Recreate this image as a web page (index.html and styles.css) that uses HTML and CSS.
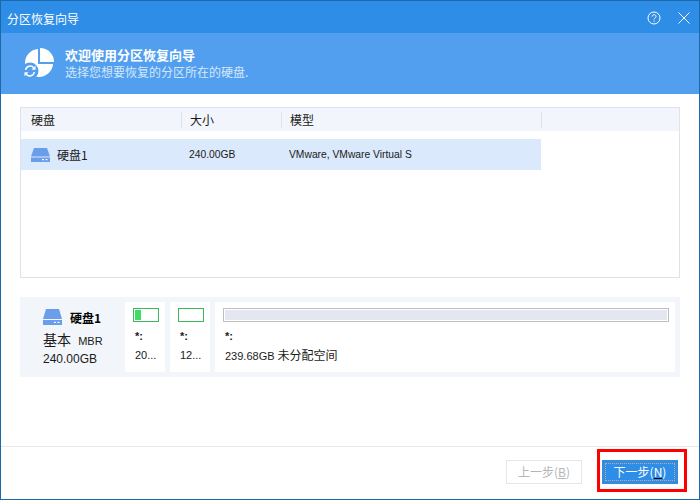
FILE: index.html
```html
<!DOCTYPE html>
<html lang="zh">
<head>
<meta charset="utf-8">
<title>分区恢复向导</title>
<link rel="stylesheet" href="styles.css">
</head>
<body>
<div class="window">
  <header class="titlebar">
    <span class="title">分区恢复向导</span>
    <div class="controls">
      <svg class="ctl" width="14" height="14" viewBox="0 0 14 14"><circle cx="7" cy="7" r="6" fill="none" stroke="#fff" stroke-width="1"/><path d="M5 5.600c0-1.200 1-1.900 2-1.900s2 .7 2 1.800c0 1.500-2 1.500-2 3" fill="none" stroke="#fff" stroke-width="1"/><rect x="6.500" y="9.600" width="1" height="1.200" fill="#fff"/></svg>
      <svg class="ctl" width="12" height="12" viewBox="0 0 12 12"><path d="M.5.5l11 11M11.500.5l-11 11" stroke="#fff" stroke-width="1"/></svg>
    </div>
  </header>
  <section class="banner">
    <svg class="banner-icon" width="34" height="34" viewBox="0 0 34 34">
      <path d="M16 3A14 14 0 1 0 31 18H16z" fill="#fff"/>
      <path d="M18 2A14 14 0 0 1 32 16H18z" fill="#fff"/>
      <circle cx="8" cy="25" r="8.500" fill="#539fef"/>
      <path d="M3.700 24a4.500 4.500 0 0 1 8-2.200M12.300 26a4.500 4.500 0 0 1-8 2.200" fill="none" stroke="#fff" stroke-width="1.500"/>
      <path d="M13.500 19.800v4h-4zM2.500 30.200v-4h4z" fill="#fff"/>
    </svg>
    <div class="banner-text">
      <div class="banner-title">欢迎使用分区恢复向导</div>
      <div class="banner-sub">选择您想要恢复的分区所在的硬盘.</div>
    </div>
  </section>
  <main class="content">
    <section class="table">
      <div class="thead">
        <div class="th col-disk">硬盘</div>
        <div class="th col-size">大小</div>
        <div class="th col-model">模型</div>
        <div class="th col-rest"></div>
      </div>
      <div class="row">
        <div class="td col-disk cell-disk">
          <svg class="disk-icon" width="19" height="14" viewBox="0 0 19 14"><path d="M3 0h13l3 8.500H0z" fill="#6a9eea"/><rect y="9.500" width="19" height="4.500" fill="#6a9eea"/><rect x="11" y="11" width="2" height="1.200" fill="#fff"/><rect x="14.500" y="11" width="2" height="1.200" fill="#fff"/></svg>
          <span>硬盘1</span>
        </div>
        <div class="td col-size">240.00GB</div>
        <div class="td col-model">VMware, VMware Virtual S</div>
      </div>
    </section>
    <section class="map">
      <div class="map-disk">
        <div class="map-name">
          <svg class="disk-icon" width="19" height="16" viewBox="0 0 19 16"><path d="M3 0h13l3 10H0z" fill="#6a9eea"/><rect y="11" width="19" height="5" fill="#6a9eea"/><rect x="11" y="12.800" width="2" height="1.200" fill="#fff"/><rect x="14.500" y="12.800" width="2" height="1.200" fill="#fff"/></svg>
          <b>硬盘1</b>
        </div>
        <div class="map-type">基本 <span class="mbr">MBR</span></div>
        <div class="map-total">240.00GB</div>
      </div>
      <div class="part narrow">
        <div class="bar green"><i class="fill"></i></div>
        <div class="drive">*:</div>
        <div class="psize">20...</div>
      </div>
      <div class="part narrow">
        <div class="bar green"></div>
        <div class="drive">*:</div>
        <div class="psize">12...</div>
      </div>
      <div class="part wide">
        <div class="bar gray"></div>
        <div class="drive">*:</div>
        <div class="psize">239.68GB<span class="cjk">未分配空间</span></div>
      </div>
    </section>
  </main>
  <footer class="footer">
    <button class="btn prev" type="button">上一步(<u>B</u>)</button>
    <div class="highlight">
      <button class="btn next" type="button"><span class="focus">下一步(<u>N</u>)</span></button>
    </div>
  </footer>
</div>
</body>
</html>
```
FILE: styles.css
```css
* { box-sizing: border-box; }
html, body { margin: 0; padding: 0; }
body {
  width: 700px;
  height: 500px;
  overflow: hidden;
  background: #fff;
  font-family: "Liberation Sans", "Noto Sans CJK SC", sans-serif;
  font-size: 11px;
  color: #1a1a1a;
}
.window {
  width: 700px;
  height: 500px;
  border: 1px solid #1c69aa;
  display: flex;
  flex-direction: column;
  background: #fff;
}
.titlebar {
  height: 32px;
  flex: none;
  background: #2e8de6;
  color: #fff;
  display: flex;
  align-items: center;
  justify-content: space-between;
  padding: 2px 9px 0 6px;
}
.title { font-size: 12px; font-family: "Noto Sans CJK SC", sans-serif; }
.controls { display: flex; align-items: center; gap: 17px; }
.ctl { display: block; }
.banner {
  height: 61px;
  flex: none;
  background: #539fef;
  display: flex;
  align-items: center;
  padding: 0 0 0 21px;
  color: #fff;
}
.banner-icon { flex: none; margin-right: 9px; margin-top: -1px; }
.banner-text { margin-top: -1px; font-family: "Noto Sans CJK SC", sans-serif; font-size: 12px; line-height: 17px; }
.banner-title { font-weight: 700; font-size: 13px; }
.banner-sub { color: #d4e7fb; }
.content {
  flex: 1;
  padding: 13px 19px 0;
}
.table {
  height: 171px;
  width: 660px;
  border: 1px solid #e0e1ec;
}
.thead {
  display: flex;
  height: 23px;
  background: #f2f5fb;
  align-items: center;
}
.th {
  height: 16px;
  line-height: 16px;
  font-family: "Noto Sans CJK SC", sans-serif;
  font-size: 12px;
  border-right: 1px solid #dfe2ea;
}
.col-disk { width: 161px; padding-left: 10px; }
.col-size { width: 100px; padding-left: 8px; }
.col-model { width: 260px; padding-left: 8px; }
.col-rest { flex: 1; border-right: 0; }
.row {
  display: flex;
  align-items: center;
  height: 31px;
  margin-top: 8px;
  width: 520px;
  background: #dbe9fd;
}
.td { flex: none; white-space: nowrap; font-size: 10.300px; }
.td.col-size, .td.col-model { padding-left: 7px; }
.cell-disk { display: flex; align-items: center; gap: 7px; }
.cell-disk span { font-family: "Noto Sans CJK SC", sans-serif; font-size: 12px; }
.disk-icon { display: block; flex: none; }
.map {
  margin-top: 19px;
  width: 660px;
  height: 80px;
  background: #f2f6fb;
  display: flex;
  gap: 5px;
  padding: 5px;
}
.map-disk { width: 95px; padding: 7px 0 0 18px; font-size: 12px; flex: none; }
.map-name { display: flex; align-items: center; gap: 8px; height: 16px; font-family: "Noto Sans CJK SC", sans-serif; }
.map-name b { font-size: 12px; color: #000; }
.map-type { margin-top: 4px; font-family: "Noto Sans CJK SC", sans-serif; font-size: 14px; line-height: 20px; white-space: nowrap; }
.mbr { font-family: "Liberation Sans", sans-serif; font-size: 11px; margin-left: 4px; }
.map-total { font-size: 12px; line-height: 16px; }
.part { background: #fff; padding: 6px 6px 0 8px; height: 70px; }
.narrow { width: 40px; flex: none; }
.wide { flex: 1; }
.bar { height: 14px; border: 1px solid #3cb95f; padding: 1px; }
.narrow .bar { width: 26px; }
.wide .bar { border-color: #bcbfc6; background: #e4e7ef; box-shadow: inset 0 0 0 1px #fff; }
.fill { display: block; width: 6px; height: 100%; background: #3fdc64; }
.drive { margin: 7px 0 0 2px; font-size: 11px; font-weight: 700; line-height: 14px; }
.psize { margin: 4px 0 0 2px; font-size: 11px; line-height: 16px; white-space: nowrap; }
.cjk { font-family: "Noto Sans CJK SC", sans-serif; font-size: 12px; margin-left: 3px; }
.footer {
  height: 53px;
  flex: none;
  border-top: 1px solid #e4e9f0;
  display: flex;
  justify-content: flex-end;
  align-items: flex-start;
  padding: 2px 12px 0 0;
}
.btn {
  width: 76px;
  height: 24px;
  padding: 0;
  font-family: "Noto Sans CJK SC", sans-serif;
  font-size: 12px;
  line-height: 20px;
  border-radius: 0;
}
.prev {
  margin: 11px 15px 0 0;
  background: #fff;
  border: 1px solid #e2e6ee;
  color: #b5b5b5;
}
.next {
  display: block;
  background: #2e8de6;
  border: 0;
  color: #fff;
  padding: 3px;
}
.focus { display: block; height: 18px; line-height: 16px; border: 1px dotted #d9a878; }
.next u { text-decoration-color: #000; }
.highlight {
  width: 90px;
  height: 43px;
  border: 3px solid #f00;
  padding: 8px 0 0 2px;
}
```
